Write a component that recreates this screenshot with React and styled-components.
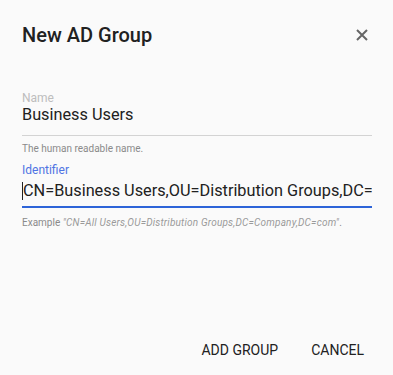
import React from 'react';
import styled, { createGlobalStyle } from 'styled-components';

const GlobalStyle = createGlobalStyle`
  body {
    margin: 0;
    background: #fafafa;
    font-family: Roboto, 'Liberation Sans', sans-serif;
  }
`;

const Dialog = styled.div`
  width: 393px;
  height: 375px;
  box-sizing: border-box;
  padding: 23px 21px 0 22px;
  background: #fafafa;
  display: flex;
  flex-direction: column;
`;

const Header = styled.div`
  display: flex;
  align-items: center;
  justify-content: space-between;
  height: 24px;
`;

const Title = styled.h2`
  margin: 0;
  font-size: 20px;
  font-weight: 500;
  color: #212121;
  line-height: 24px;
`;

const CloseButton = styled.button`
  border: none;
  background: none;
  padding: 0;
  margin: 0 3px 0 0;
  width: 14px;
  height: 14px;
  display: flex;
  align-items: center;
  justify-content: center;
  cursor: pointer;
`;

const Body = styled.div`
  flex: 1;
  padding-top: 45px;
  display: flex;
  flex-direction: column;
`;

const Field = styled.div`
  display: flex;
  flex-direction: column;
  margin-bottom: ${(p) => p.$gap || 0}px;
`;

const Label = styled.label`
  font-size: 12px;
  line-height: 12px;
  color: ${(p) => (p.$active ? '#4f74e3' : '#bdbdbd')};
`;

const InputBox = styled.div`
  height: 22px;
  margin-top: ${(p) => (p.$active ? 4 : 0)}px;
  font-size: 16.3px;
  line-height: 22px;
  color: #212121;
  white-space: nowrap;
  overflow: hidden;
  padding-bottom: ${(p) => (p.$active ? 4 : 9)}px;
  border-bottom: ${(p) => (p.$active ? '2px solid #2d64d8' : '1px solid #d3d3d3')};
`;

const Caret = styled.span`
  display: inline-block;
  width: 1px;
  height: 18px;
  background: #212121;
  vertical-align: -4px;
`;

const Helper = styled.div`
  margin-top: ${(p) => p.$top}px;
  font-size: 10px;
  line-height: 12px;
  color: #8a8a8a;
`;

const Quote = styled.i`
  color: #9a9a9a;
  letter-spacing: 0.2px;
`;

const Actions = styled.div`
  display: flex;
  justify-content: flex-end;
  gap: 17px;
  padding-bottom: 7px;
`;

const ActionButton = styled.button`
  border: none;
  background: none;
  font-family: Roboto, 'Liberation Sans', sans-serif;
  font-size: 14px;
  font-weight: 400;
  color: #212121;
  text-transform: uppercase;
  padding: 8px;
  line-height: 20px;
  cursor: pointer;
`;

export default function App() {
  return (
    <>
      <GlobalStyle />
      <Dialog>
        <Header>
          <Title>New AD Group</Title>
          <CloseButton aria-label="close">
            <svg width="12" height="12" viewBox="0 0 12 12">
              <path d="M1 1 L11 11 M11 1 L1 11" stroke="#666" strokeWidth="2" />
            </svg>
          </CloseButton>
        </Header>
        <Body>
          <Field $gap={9}>
            <Label>Name</Label>
            <InputBox>Business Users</InputBox>
            <Helper $top={7}>The human readable name.</Helper>
          </Field>
          <Field>
            <Label $active>Identifier</Label>
            <InputBox $active>
              <Caret />
              CN=Business Users,OU=Distribution Groups,DC=Company,DC=com
            </InputBox>
            <Helper $top={9}>
              Example <Quote>"CN=All Users,OU=Distribution Groups,DC=Company,DC=com"</Quote>.
            </Helper>
          </Field>
        </Body>
        <Actions>
          <ActionButton>Add Group</ActionButton>
          <ActionButton>Cancel</ActionButton>
        </Actions>
      </Dialog>
    </>
  );
}
